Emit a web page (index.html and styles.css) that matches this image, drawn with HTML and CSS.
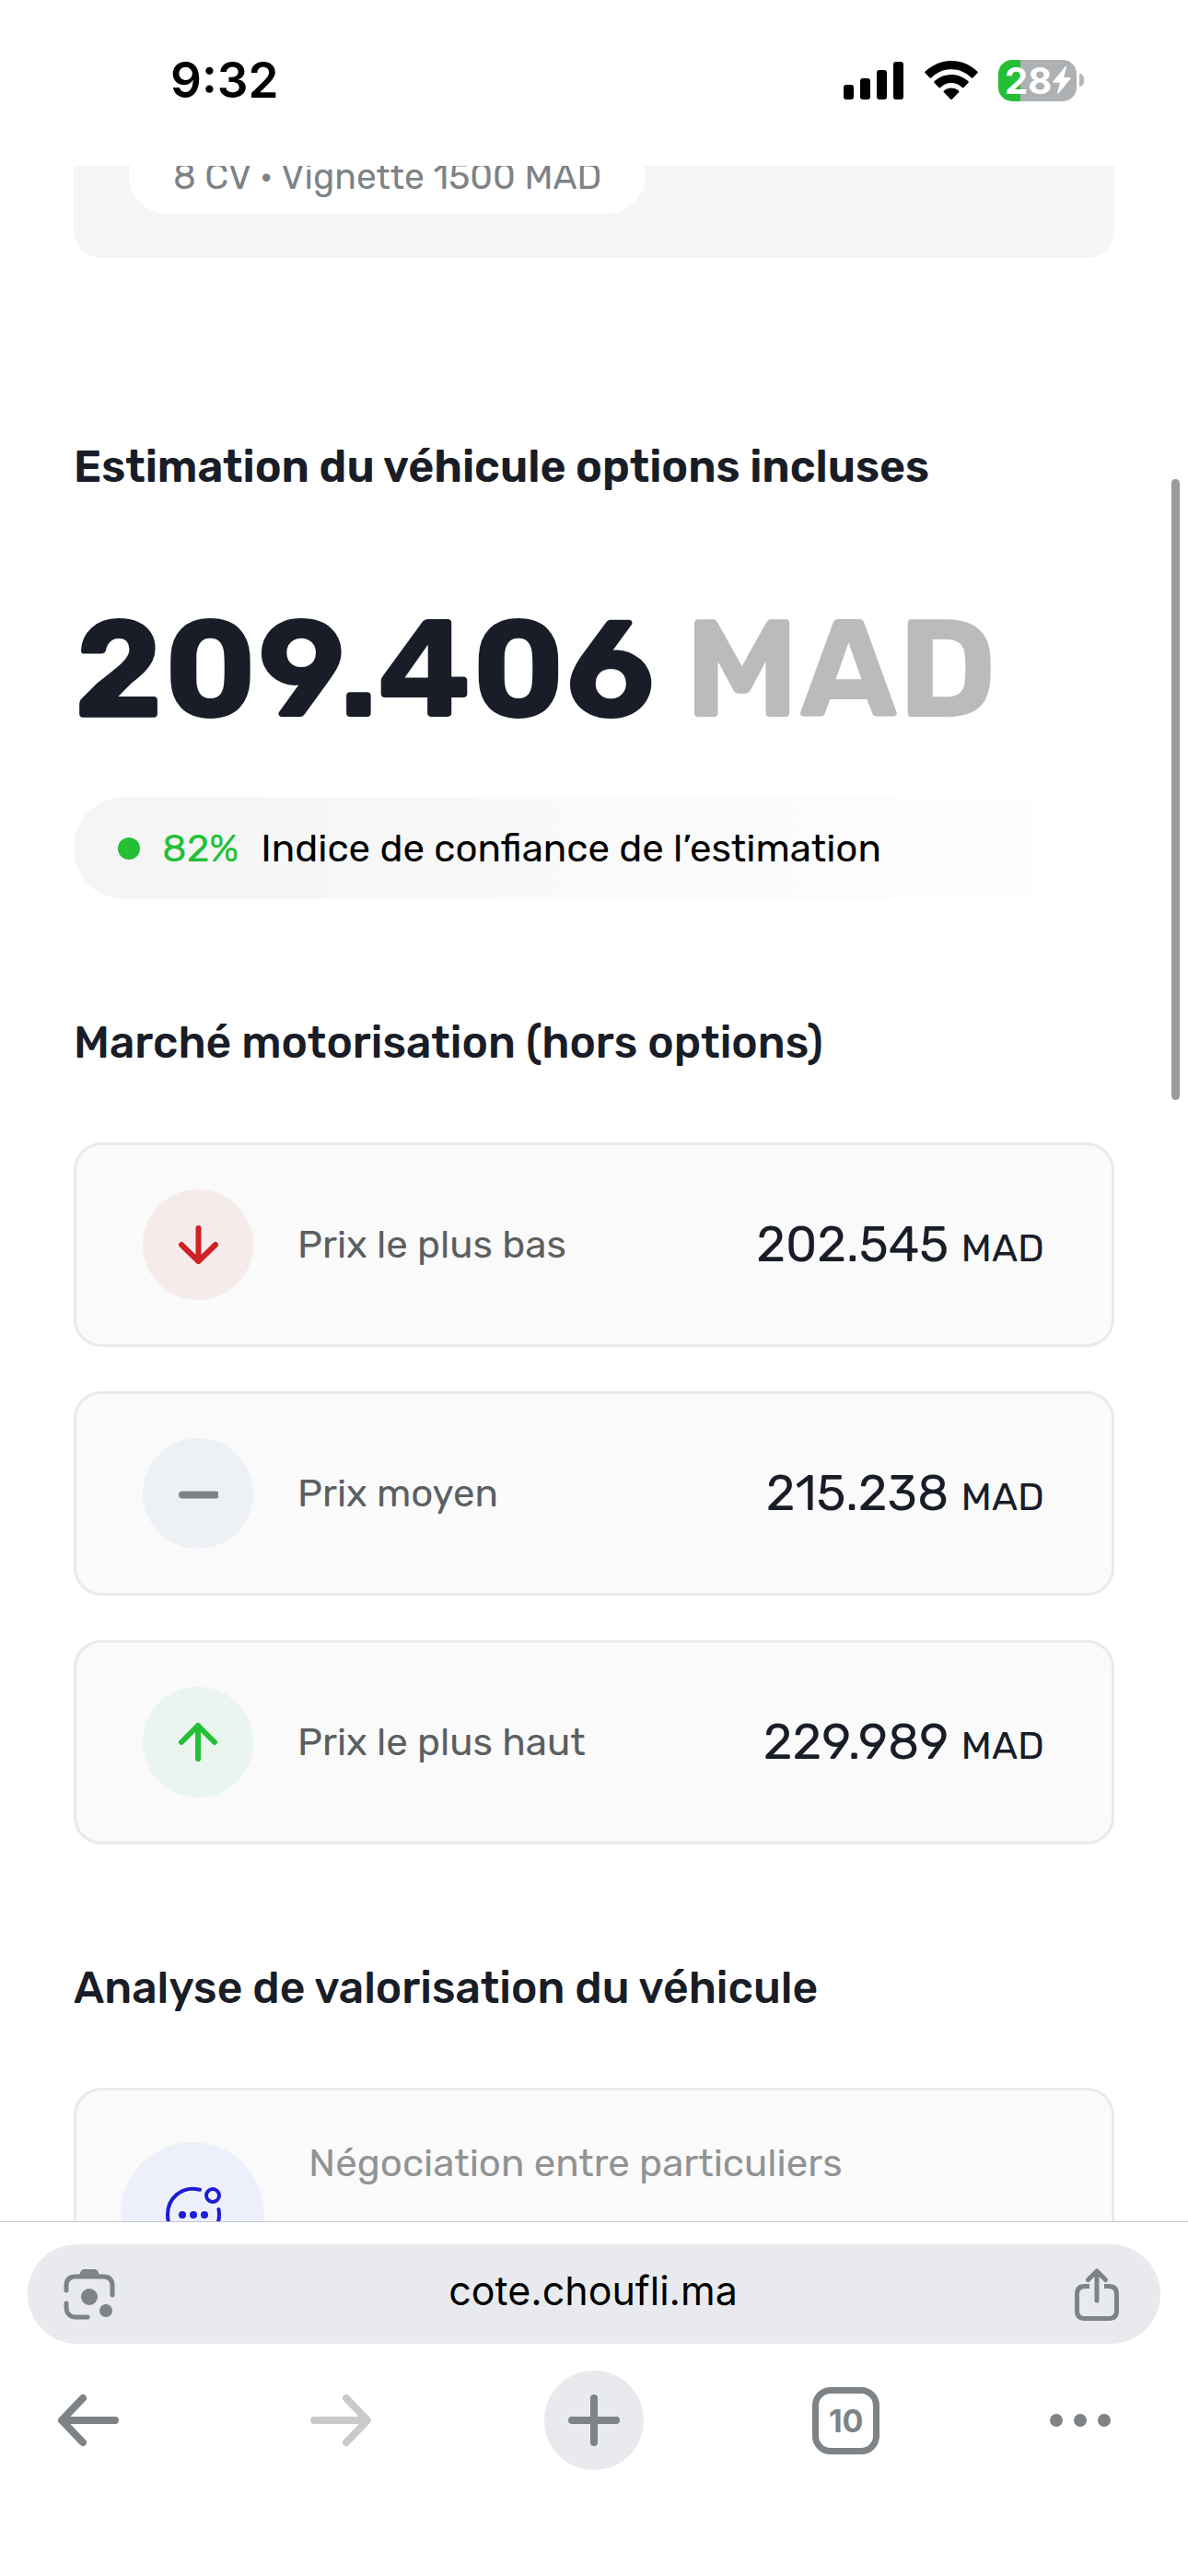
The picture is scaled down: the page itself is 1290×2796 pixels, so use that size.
FILE: index.html
```html
<!DOCTYPE html>
<html lang="fr">
<head>
    <meta charset="UTF-8">
    <meta name="viewport" content="width=device-width, initial-scale=1.0">
    <title>cote.choufli.ma</title>
    <link rel="stylesheet" href="styles.css">
</head>

<body>
    <header class="status-bar">
        <span class="clock">9:32</span>
        <div class="status-icons">
            <svg width="66" height="42" viewBox="0 0 66 42" aria-hidden="true">
                <rect x="0" y="26" width="11" height="16" rx="3" />
                <rect x="18" y="19" width="11" height="23" rx="3" />
                <rect x="36" y="10" width="11" height="32" rx="3" />
                <rect x="54" y="1" width="11" height="41" rx="3" />
            </svg>
            <svg width="58" height="43" viewBox="0 0 58 43" aria-hidden="true">
                <path d="M29 0C18 0 8 4.5 0.8 11.4a1.5 1.5 0 0 0 0 2.2l4.6 4.6a1.5 1.5 0 0 0 2.1 0C13 12.7 20.5 9.3 29 9.3s16 3.4 21.5 8.9a1.5 1.5 0 0 0 2.1 0l4.6-4.6a1.5 1.5 0 0 0 0-2.2C50 4.5 40 0 29 0Z" />
                <path d="M29 15c-7 0-13.4 2.7-18.2 7.1a1.5 1.5 0 0 0 0 2.2l4.5 4.5a1.5 1.5 0 0 0 2.1 0C20.5 26 24.5 24 29 24s8.5 2 11.6 4.8a1.5 1.5 0 0 0 2.1 0l4.5-4.5a1.5 1.5 0 0 0 0-2.2C42.4 17.7 36 15 29 15Z" />
                <path d="M29 29.5c-3 0-5.8 1.1-8 2.9a1.2 1.2 0 0 0 0 1.9l7 7.2a1.4 1.4 0 0 0 2 0l7-7.2a1.2 1.2 0 0 0 0-1.9c-2.2-1.8-5-2.9-8-2.9Z" />
            </svg>
            <div class="battery">
                <span class="battery-body">28
                    <svg width="20" height="30" viewBox="0 0 20 30" aria-hidden="true">
                        <path d="M13.5 0.5 0.5 16.2c-.6.8-.3 1.5.6 1.5H8L5 28.5c-.4 1.3.8 1.6 1.5.8L19.4 13.6c.6-.8.3-1.5-.6-1.5H12L15 1.3C15.3 0 14.2-.3 13.5.5Z" fill="#fff" />
                    </svg>
                </span>
                <span class="battery-tip"></span>
            </div>
        </div>
    </header>

    <main class="page">
        <div class="car-card">
            <span class="car-tag">8 CV • Vignette 1500 MAD</span>
        </div>

        <h1 class="title title-main">Estimation du véhicule options incluses</h1>
        <p class="estimate">209.406 <span class="estimate-unit">MAD</span></p>
        <p class="confidence">
            <span class="confidence-dot"></span>
            <span class="confidence-rate">82%</span>
            <span>Indice de confiance de l’estimation</span>
        </p>

        <h2 class="title">Marché motorisation (hors options)</h2>
        <ul class="prices">
            <li class="price">
                <span class="price-icon low">
                    <svg width="44" height="44" viewBox="0 0 44 44" aria-hidden="true"><path d="M22.5 4V40M4 22 22.5 40 41 22" /></svg>
                </span>
                <span class="price-label">Prix le plus bas</span>
                <span class="price-value">202.545 <small>MAD</small></span>
            </li>
            <li class="price">
                <span class="price-icon average">
                    <svg width="44" height="44" viewBox="0 0 44 44" aria-hidden="true"><path d="M5 23.5H41" /></svg>
                </span>
                <span class="price-label">Prix moyen</span>
                <span class="price-value">215.238 <small>MAD</small></span>
            </li>
            <li class="price">
                <span class="price-icon high">
                    <svg width="44" height="44" viewBox="0 0 44 44" aria-hidden="true"><path d="M22 40V4M4 22 22 4 40 22" /></svg>
                </span>
                <span class="price-label">Prix le plus haut</span>
                <span class="price-value">229.989 <small>MAD</small></span>
            </li>
        </ul>

        <h2 class="title">Analyse de valorisation du véhicule</h2>
        <div class="analysis">
            <span class="analysis-icon">
                <svg width="64" height="64" viewBox="0 0 64 64" fill="none" stroke="#1d1dd2" stroke-width="4" stroke-linecap="round" aria-hidden="true">
                    <path d="M40 5.8C20 1 5 15 5 33c0 5 1 9 3 13L5 61l14-4c4 2 9 4 14 4 15 0 28-13 28-28 0-2 0-4-.6-6" />
                    <circle cx="54" cy="12" r="7" />
                    <g fill="#1d1dd2" stroke="none"><circle cx="21" cy="33" r="4" /><circle cx="33" cy="33" r="4" /><circle cx="45" cy="33" r="4" /></g>
                </svg>
            </span>
            <span class="analysis-label">Négociation entre particuliers</span>
        </div>
    </main>
    <div class="scroll-thumb"></div>

    <footer class="browser">
        <div class="address-bar">
            <button class="icon-button" type="button" aria-label="Recherche visuelle">
                <svg width="58" height="58" viewBox="0 0 58 58" aria-hidden="true">
                    <path d="M4 25V20C4 13 8 10 14 10H44C51 10 54 14 54 20V30M4 39V43C4 50 8 54 14 54H27" fill="none" stroke="#7d8387" stroke-width="5" stroke-linecap="round" />
                    <path d="M16 12 20 4Q21 2 23 2H35Q37 2 38 4L42 12Z" />
                    <circle cx="29" cy="32" r="9" /><circle cx="47" cy="47" r="7" />
                </svg>
            </button>
            <a class="address" href="#">cote.choufli.ma</a>
            <button class="icon-button" type="button" aria-label="Partager">
                <svg class="line-icon" width="58" height="58" viewBox="0 0 58 58" aria-hidden="true">
                    <path d="M21 20.5H16Q7.5 20.5 7.5 29V47Q7.5 55.5 16 55.5H42Q50.5 55.5 50.5 47V29Q50.5 20.5 42 20.5H37" stroke-linecap="butt" />
                    <path d="M29 36V5M19.5 13.5 29 4 38.5 13.5" />
                </svg>
            </button>
        </div>
        <nav class="toolbar">
            <button class="tool" type="button" aria-label="Retour">
                <svg class="line-icon" width="68" height="60" viewBox="0 0 68 60" aria-hidden="true"><path d="M63 30H6M28 6 5 30 28 54" /></svg>
            </button>
            <button class="tool forward" type="button" aria-label="Suivant">
                <svg class="line-icon" width="68" height="60" viewBox="0 0 68 60" aria-hidden="true"><path d="M5 30H62M40 6 63 30 40 54" /></svg>
            </button>
            <button class="tool new-tab" type="button" aria-label="Nouvel onglet">
                <svg class="line-icon" width="60" height="60" viewBox="0 0 60 60" aria-hidden="true"><path d="M30 6V54M6 30H54" /></svg>
            </button>
            <button class="tool" type="button" aria-label="Onglets"><span class="tab-count">10</span></button>
            <button class="tool more" type="button" aria-label="Menu">
                <svg width="68" height="16" viewBox="0 0 68 16" aria-hidden="true"><circle cx="8" cy="8" r="7" /><circle cx="34" cy="8" r="7" /><circle cx="60" cy="8" r="7" /></svg>
            </button>
        </nav>
    </footer>
</body>
</html>
```
FILE: styles.css
```css
* {
    box-sizing: border-box;
}

body {
    display: flex;
    flex-direction: column;
    height: 100vh;
    margin: 0;
    overflow: hidden;
    font-family: Rubik, Inter, "Liberation Sans", sans-serif;
    color: #191d27;
    background-color: #fff;
}

button {
    display: flex;
    align-items: center;
    justify-content: center;
    padding: 0;
    border: none;
    background: none;
    fill: #7d8387;
}

/* status bar */
.status-bar {
    display: flex;
    flex: none;
    align-items: center;
    justify-content: space-between;
    height: 180px;
    padding: 0 113px 6px 185px;
    font-family: Inter, "Liberation Sans", sans-serif;
    color: #000;
}

.clock {
    font-size: 53px;
    font-weight: 600;
}

.status-icons {
    display: flex;
    align-items: center;
    gap: 22px;
}

.battery {
    display: flex;
    align-items: center;
    gap: 3px;
}

.battery-body {
    display: flex;
    align-items: center;
    gap: 1px;
    height: 45px;
    width: 85px;
    padding-left: 7px;
    border-radius: 15px;
    font-size: 40px;
    font-weight: 700;
    color: #fff;
    background: linear-gradient(90deg, #23c036 24px, #aeb1b3 24px);
}

.battery-tip {
    width: 5px;
    height: 14px;
    border-radius: 0 6px 6px 0;
    background-color: #b5b8b9;
}

/* page */
.page {
    display: flex;
    flex: 1;
    flex-direction: column;
    min-height: 0;
    overflow: hidden;
    padding: 0 80px;
}

.page > * {
    flex: none;
}

.car-card {
    display: flex;
    align-items: flex-end;
    height: 100px;
    padding: 0 60px 48px;
    border-radius: 0 0 30px 30px;
    background-color: #f5f5f5;
    overflow: hidden;
}

.car-tag {
    padding: 2px 48px 0;
    border-radius: 41px;
    font-size: 39px;
    line-height: 80px;
    color: #7d8387;
    background-color: #fff;
}

.title {
    margin: 124px 0 76px;
    font-size: 48px;
    font-weight: 500;
    line-height: 64px;
}

.title-main {
    margin-top: 195px;
    font-weight: 600;
}

.estimate {
    margin: 22px 0 48px;
    font-size: 150px;
    font-weight: 700;
    line-height: 180px;
}

.estimate-unit {
    color: #bbb;
}

.confidence {
    display: flex;
    align-items: center;
    height: 111px;
    margin: 0;
    padding: 0 48px;
    border-radius: 56px 0 0 56px;
    font-size: 42px;
    color: #000;
    background: linear-gradient(90deg, #f4f4f4, #fff);
}

.confidence-dot {
    width: 24px;
    height: 24px;
    border-radius: 50%;
    background-color: #23c036;
}

.confidence-rate {
    margin: 0 24px;
    color: #23c036;
}

/* price list */
.prices {
    display: flex;
    flex-direction: column;
    gap: 48px;
    margin: 0;
    padding: 0;
    list-style: none;
}

.price,
.analysis {
    display: flex;
    border: 3px solid #e8eaed;
    border-radius: 30px;
    background-color: #fafafa;
}

.price {
    align-items: center;
    height: 222px;
    padding: 0 73px 0 72px;
}

.price-icon {
    display: flex;
    align-items: center;
    justify-content: center;
    width: 120px;
    height: 120px;
    border-radius: 50%;
    fill: none;
    stroke-width: 6;
    stroke-linecap: round;
    stroke-linejoin: round;
}

.low {
    stroke: #cf2227;
    background-color: #f5ebea;
}

.average {
    stroke: #7d8387;
    stroke-width: 8;
    background-color: #edf1f5;
}

.high {
    stroke: #23c036;
    background-color: #eaf5ef;
}

.price-label {
    flex: 1;
    margin-left: 48px;
    font-size: 42px;
    color: #5c5f61;
}

.price-value {
    font-size: 54px;
}

.price-value small {
    font-size: 42px;
}

.analysis {
    align-items: flex-start;
    gap: 48px;
    height: 274px;
    padding: 56px 48px;
}

.analysis-icon {
    display: flex;
    align-items: center;
    justify-content: center;
    width: 156px;
    height: 156px;
    border-radius: 50%;
    background-color: #edf0fa;
}

.analysis-label {
    font-size: 42px;
    line-height: 46px;
    color: #919395;
}

.scroll-thumb {
    position: absolute;
    top: 520px;
    right: 9px;
    width: 9px;
    height: 674px;
    border-radius: 5px;
    background-color: #9b9b9b;
}

/* browser chrome */
.browser {
    flex: none;
    height: 385px;
    border-top: 1px solid #c4c6c8;
    background-color: #fff;
}

.address-bar {
    display: flex;
    align-items: center;
    justify-content: space-between;
    height: 108px;
    margin: 24px 30px 29px;
    padding: 0 40px 0 38px;
    border-radius: 54px;
    background-color: #e8eaed;
}

.address {
    padding-bottom: 8px;
    font-family: Inter, "Liberation Sans", sans-serif;
    font-size: 43px;
    color: #000;
    text-decoration: none;
}

.line-icon {
    fill: none;
    stroke: #7d8387;
    stroke-width: 8;
    stroke-linecap: round;
    stroke-linejoin: round;
}

.icon-button .line-icon {
    stroke-width: 5;
}

.toolbar {
    display: flex;
    justify-content: space-between;
    padding: 0 83px 0 42px;
}

.tool {
    width: 108px;
    height: 108px;
    border-radius: 50%;
}

.forward .line-icon {
    stroke: #c9cacc;
}

.new-tab {
    background-color: #e8eaed;
}

.more {
    width: 68px;
}

.tab-count {
    display: flex;
    align-items: center;
    justify-content: center;
    width: 73px;
    height: 73px;
    border: 7px solid #7d8387;
    border-radius: 20px;
    font-family: Inter, "Liberation Sans", sans-serif;
    font-size: 34px;
    font-weight: 700;
    color: #7d8387;
}
```
